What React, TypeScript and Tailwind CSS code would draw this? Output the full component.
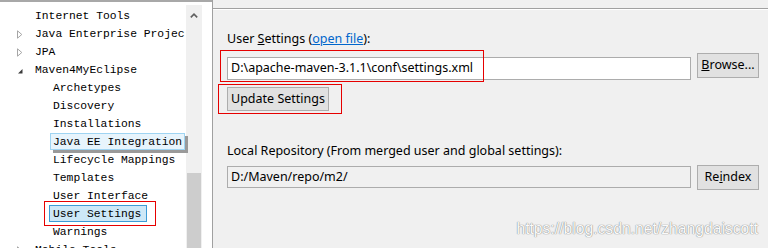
import React from "react";

type Row = { label: string; level: 1 | 2; exp?: "closed" | "open"; kind?: "hover" | "selected" };

const rows: Row[] = [
  { label: "Internet Tools", level: 1 },
  { label: "Java Enterprise Projec", level: 1, exp: "closed" },
  { label: "JPA", level: 1, exp: "closed" },
  { label: "Maven4MyEclipse", level: 1, exp: "open" },
  { label: "Archetypes", level: 2 },
  { label: "Discovery", level: 2 },
  { label: "Installations", level: 2 },
  { label: "Java EE Integration", level: 2, kind: "hover" },
  { label: "Lifecycle Mappings", level: 2 },
  { label: "Templates", level: 2 },
  { label: "User Interface", level: 2 },
  { label: "User Settings", level: 2, kind: "selected" },
  { label: "Warnings", level: 2 },
  { label: "Mobile Tools", level: 1, exp: "closed" },
];

function Expander({ exp }: { exp?: "closed" | "open" }) {
  if (exp === "closed")
    return (
      <svg width="6" height="9" viewBox="0 0 6 9" className="block">
        <path d="M0.5 0.8 L4.8 4.5 L0.5 8.2 Z" fill="none" stroke="#a6a6a6" strokeWidth="1" />
      </svg>
    );
  if (exp === "open")
    return (
      <svg width="6" height="9" viewBox="0 0 6 9" className="block">
        <path d="M5.5 3 L5.5 7.5 L1 7.5 Z" fill="#3c3c3c" />
      </svg>
    );
  return null;
}

function TreeRow({ r }: { r: Row }) {
  const textLeft = r.level === 1 ? 35 : 53;
  if (r.kind === "hover") {
    return (
      <div className="h-[18px] flex items-start">
        <span className="relative z-10 ml-[50px] h-[17px] leading-[16px] pl-[2px] pr-[2px] border border-[#9fd4f2] bg-[#e7f4fc] whitespace-nowrap shadow-[3px_3px_0_0_#9a9a9a]">
          {r.label}
        </span>
      </div>
    );
  }
  if (r.kind === "selected") {
    return (
      <div className="relative h-[18px] flex items-start">
        <span className="ml-[49px] h-[17px] leading-[16px] pl-[3px] pr-[5px] border border-[#3c9bd6] bg-[#cde8f7] whitespace-nowrap">
          {r.label}
        </span>
        <div className="absolute left-[44px] top-[-4px] w-[112px] h-[25px] border border-[#e60000]" />
      </div>
    );
  }
  return (
    <div className="h-[18px] flex items-center whitespace-nowrap">
      {r.level === 1 ? (
        <>
          <div className="w-[17px]" />
          <div className="w-[18px]">
            <Expander exp={r.exp} />
          </div>
        </>
      ) : (
        <div style={{ width: textLeft }} />
      )}
      <span className="leading-[18px]">{r.label}</span>
    </div>
  );
}

export default function App() {
  return (
    <div className="w-[768px] h-[248px] overflow-hidden flex bg-white">
      {/* left tree panel */}
      <div className="w-[212px] h-full flex flex-col border-t-2 border-[#a8a8a8] bg-white">
        <div className="flex flex-1">
          <div className="w-[186px] pt-[5px] text-[11.33px] text-black font-['Liberation_Mono','Courier_New',monospace]">
            {rows.map((r) => (
              <TreeRow key={r.label} r={r} />
            ))}
          </div>
          <div className="w-[16px] mt-[3px] bg-[#f0f0f0] flex flex-col">
            <div className="h-[21px] flex items-center justify-center">
              <svg width="8" height="5" viewBox="0 0 8 5">
                <path d="M0.8 4.4 L4 1.2 L7.2 4.4" fill="none" stroke="#606060" strokeWidth="1.6" />
              </svg>
            </div>
            <div className="h-[147px]" />
            <div className="flex-1 mx-[1px] bg-[#cdcdcd]" />
          </div>
          <div className="w-[10px]" />
        </div>
      </div>
      <div className="w-px h-full bg-[#a0a0a0]" />
      {/* right panel */}
      <div className="flex-1 h-full bg-[#f0f0f0] flex flex-col text-[12.5px] text-black font-['Noto_Sans','Segoe_UI',sans-serif]">
        <div className="h-[9px] border-b border-[#a0a0a0]" />
        <div className="h-px bg-white" />
        <div className="pl-[14px] pr-[9px] flex flex-col">
          <div className="mt-[21px] h-[16px] leading-[16px] whitespace-nowrap">
            User <span className="underline">S</span>ettings (
            <span className="text-[#0066cc] underline">open file</span>):
          </div>
          <div className="mt-[6px] flex items-start gap-[6px]">
            <div className="relative flex-1 mt-[4px] h-[23px] bg-white border border-[#acacac] flex items-center pl-[3px] whitespace-nowrap">
              D:\apache-maven-3.1.1\conf\settings.xml
              <div className="absolute left-[-8px] top-[-8px] w-[264px] h-[32px] border border-[#e60000]" />
            </div>
            <div className="w-[62px] h-[25px] bg-[#e1e1e1] border border-[#adadad] flex items-center justify-center">
              <span>
                <span className="underline">B</span>rowse...
              </span>
            </div>
          </div>
          <div className="mt-[7px] flex">
            <div className="relative w-[102px] h-[24px] bg-[#e1e1e1] border border-[#adadad] flex items-center justify-center whitespace-nowrap">
              Update Settings
              <div className="absolute left-[-10px] top-[-4px] w-[124px] h-[30px] border border-[#e60000]" />
            </div>
          </div>
          <div className="mt-[32px] h-[16px] leading-[16px] whitespace-nowrap">
            Local Repository (From merged user and global settings):
          </div>
          <div className="mt-[6px] flex items-start gap-[6px]">
            <div className="flex-1 mt-[1px] h-[22px] bg-[#f0f0f0] border border-[#acacac] flex items-center pl-[3px] whitespace-nowrap">
              D:/Maven/repo/m2/
            </div>
            <div className="w-[62px] h-[25px] bg-[#e1e1e1] border border-[#adadad] flex items-center justify-center">
              <span>
                Re<span className="underline">i</span>ndex
              </span>
            </div>
          </div>
          <div className="mt-[30px] flex justify-end pr-[1px]">
            <span className="h-[18px] leading-[18px] text-[15.7px] text-[#fafafa] font-['Liberation_Sans',Arial,sans-serif] [text-shadow:0_0_1px_#7a7a7a,0_0_1px_#9a9a9a] whitespace-nowrap">
              https://blog.csdn.net/zhangdaiscott
            </span>
          </div>
        </div>
      </div>
    </div>
  );
}
